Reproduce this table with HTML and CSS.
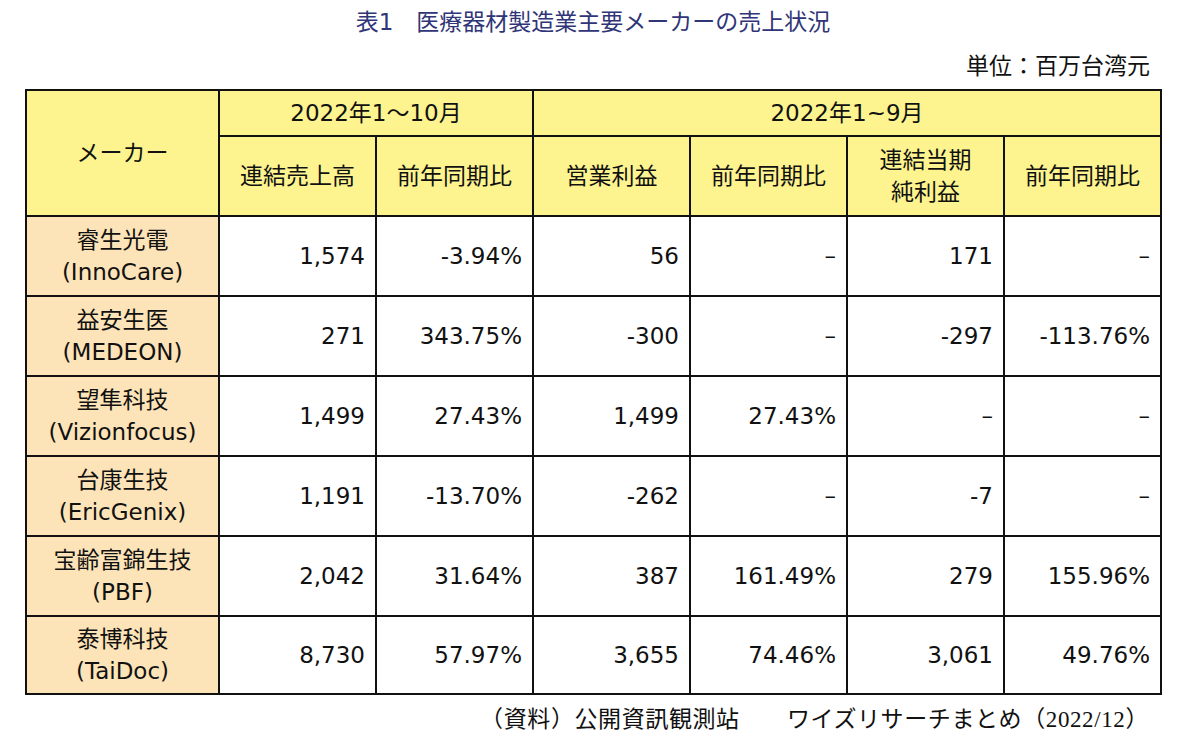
FILE: index.html
```html
<!DOCTYPE html>
<html lang="ja">
<head>
<meta charset="utf-8">
<link rel="stylesheet" href="styles.css">
</head>
<body>
<div class="page">
  <h1 class="title">表1　医療器材製造業主要メーカーの売上状況</h1>
  <div class="unit">単位：百万台湾元</div>
  <table class="data">
    <colgroup>
      <col class="c-name"><col><col><col><col><col><col>
    </colgroup>
    <thead>
      <tr class="h1">
        <th rowspan="2" class="maker-h">メーカー</th>
        <th colspan="2">2022年1～10月</th>
        <th colspan="4">2022年1~9月</th>
      </tr>
      <tr class="h2">
        <th>連結売上高</th>
        <th>前年同期比</th>
        <th>営業利益</th>
        <th>前年同期比</th>
        <th>連結当期<br>純利益</th>
        <th>前年同期比</th>
      </tr>
    </thead>
    <tbody>
      <tr><th class="name">睿生光電<br>(InnoCare)</th><td>1,574</td><td>-3.94%</td><td>56</td><td>–</td><td>171</td><td>–</td></tr>
      <tr><th class="name">益安生医<br>(MEDEON)</th><td>271</td><td>343.75%</td><td>-300</td><td>–</td><td>-297</td><td>-113.76%</td></tr>
      <tr><th class="name">望隼科技<br>(Vizionfocus)</th><td>1,499</td><td>27.43%</td><td>1,499</td><td>27.43%</td><td>–</td><td>–</td></tr>
      <tr><th class="name">台康生技<br>(EricGenix)</th><td>1,191</td><td>-13.70%</td><td>-262</td><td>–</td><td>-7</td><td>–</td></tr>
      <tr><th class="name">宝齢富錦生技<br>(PBF)</th><td>2,042</td><td>31.64%</td><td>387</td><td>161.49%</td><td>279</td><td>155.96%</td></tr>
      <tr><th class="name">泰博科技<br>(TaiDoc)</th><td>8,730</td><td>57.97%</td><td>3,655</td><td>74.46%</td><td>3,061</td><td>49.76%</td></tr>
    </tbody>
  </table>
  <p class="source">（資料）公開資訊観測站　　ワイズリサーチまとめ（2022/12）</p>
</div>
</body>
</html>
```

FILE: styles.css
```css
html, body {
  margin: 0;
  padding: 0;
  background: #ffffff;
}

.page {
  width: 1136px;
  margin-left: 25px;
  font-family: "DejaVu Sans", "Noto Sans CJK JP", sans-serif;
  color: #111111;
}

.title {
  margin: 0;
  height: 44px;
  line-height: 44px;
  font-size: 23px;
  font-weight: 400;
  text-align: center;
  color: #2f3577;
}

.unit {
  height: 45px;
  line-height: 46px;
  text-align: right;
  padding-right: 11px;
  font-family: "Liberation Serif", "Noto Sans CJK JP", serif;
  font-size: 23px;
  color: #111111;
}

.data {
  width: 1136px;
  border-collapse: collapse;
  table-layout: fixed;
  border: 2px solid #111111;
  font-size: 23px;
}

.data col {
  width: 157px;
}

.data col.c-name {
  width: 193px;
}

.data th,
.data td {
  border: 2px solid #111111;
  padding: 0;
  font-weight: 400;
  line-height: 32px;
}

.data thead th {
  background: #fdf48f;
  text-align: center;
}

.data tr.h1 {
  height: 46px;
}

.data tr.h2 {
  height: 80px;
}

.data tbody tr {
  height: 80px;
}

.data tbody tr:last-child {
  height: 78px;
}

.data th.name {
  background: #fde4b8;
  text-align: center;
}

.data td {
  text-align: right;
  padding-right: 10px;
  background: #ffffff;
}

.source {
  margin: 0;
  height: 50px;
  line-height: 50px;
  text-align: right;
  padding-right: 12px;
  font-family: "Liberation Serif", "Noto Sans CJK JP", serif;
  font-size: 23px;
  letter-spacing: 0.6px;
  color: #111111;
}
```
